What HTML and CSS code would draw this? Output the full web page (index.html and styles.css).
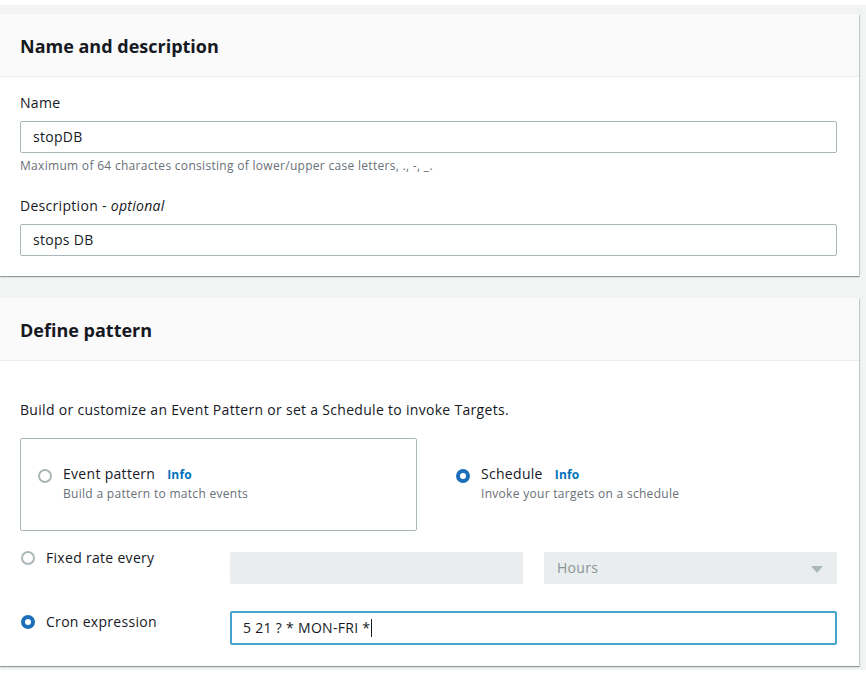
FILE: index.html
```html
<!DOCTYPE html>
<html>
<head>
<meta charset="utf-8">
<link rel="stylesheet" href="styles.css">
</head>
<body>
<div class="page">
  <section class="panel">
    <div class="panel-header"><h2>Name and description</h2></div>
    <div class="panel-body panel-body-1">
      <div class="field">
        <div class="label">Name</div>
        <div class="input">stopDB</div>
        <div class="hint">Maximum of 64 charactes consisting of lower/upper case letters, ., -, _.</div>
      </div>
      <div class="field field-2">
        <div class="label">Description - <i>optional</i></div>
        <div class="input">stops DB</div>
      </div>
    </div>
  </section>

  <section class="panel panel-2">
    <div class="panel-header"><h2>Define pattern</h2></div>
    <div class="panel-body panel-body-2">
      <p class="intro">Build or customize an Event Pattern or set a Schedule to invoke Targets.</p>
      <div class="tiles">
        <div class="tile tile-bordered">
          <span class="radio"></span>
          <div class="tile-text">
            <div class="tile-title">Event pattern <span class="info">Info</span></div>
            <div class="tile-sub">Build a pattern to match events</div>
          </div>
        </div>
        <div class="tile tile-plain">
          <span class="radio checked"></span>
          <div class="tile-text">
            <div class="tile-title">Schedule <span class="info">Info</span></div>
            <div class="tile-sub">Invoke your targets on a schedule</div>
          </div>
        </div>
      </div>
      <div class="row row-fixed">
        <div class="row-label"><span class="radio"></span><span>Fixed rate every</span></div>
        <div class="row-controls">
          <div class="input disabled"></div>
          <div class="input disabled select">Hours<span class="caret-down"></span></div>
        </div>
      </div>
      <div class="row row-cron">
        <div class="row-label"><span class="radio checked"></span><span>Cron expression</span></div>
        <div class="row-controls">
          <div class="input focused">5 21 ? * MON-FRI *<span class="text-caret"></span></div>
        </div>
      </div>
    </div>
  </section>
</div>
</body>
</html>
```

FILE: styles.css
```css
* { box-sizing: border-box; }
html, body { margin: 0; padding: 0; background: #ffffff; }
body {
  font-family: "Open Sans", "Liberation Sans", Arial, sans-serif;
  font-size: 14px;
  line-height: 22px;
  letter-spacing: 0.3px;
  color: #16191f;
}
.page {
  margin-top: 5px;
  background: #f2f3f3;
  padding: 9px 7px 4px 0;
  width: 866px;
}
.panel {
  background: #ffffff;
  width: 859px;
  box-shadow: 0 1px 1px 0 rgba(0,28,36,0.3), 1px 1px 1px 0 rgba(0,28,36,0.15);
}
.panel-2 { margin-top: 22px; }
.panel-header {
  background: #fafafa;
  border-bottom: 1px solid #eaeded;
  padding: 21px 20px 19px;
}
.panel-header h2 {
  margin: 0;
  font-size: 18px;
  line-height: 22px;
  font-weight: 700;
  letter-spacing: 0;
}
.panel-body { padding: 15px 22px 20px 20px; }
.panel-body-2 { padding-top: 38px; padding-bottom: 21px; }
.label { line-height: 22px; margin-bottom: 7px; }
.input {
  height: 32px;
  border: 1px solid #aab7b8;
  border-radius: 2px;
  padding: 0 12px;
  line-height: 30px;
  background: #fff;
  color: #16191f;
}
.hint {
  font-size: 12px;
  line-height: 16px;
  color: #687078;
  margin-top: 5px;
}
.field-2 { margin-top: 21px; }
.intro { margin: 0 0 17px 0; }
.tiles {
  display: grid;
  grid-template-columns: 397px 397px;
  column-gap: 20px;
}
.tile {
  height: 93px;
  display: flex;
  align-items: center;
  padding: 0 17px 4px 17px;
  border: 1px solid transparent;
}
.tile-plain { padding-left: 18px; }
.tile-bordered { border-color: #aab7b8; border-radius: 2px; }
.radio {
  width: 14px;
  height: 14px;
  border-radius: 50%;
  border: 2px solid #aab7b8;
  background: #fff;
  flex: none;
  align-self: flex-start;
}
.tile .radio { margin-top: 30px; }
.radio.checked {
  border: 4px solid #1d6fba;
  background: #fff;
}
.tile-text { margin-left: 11px; }
.tile-title { line-height: 22px; }
.info { color: #0073bb; font-weight: 700; font-size: 12px; margin-left: 8px; letter-spacing: 0.2px; }
.tile-sub { font-size: 12px; line-height: 16px; color: #687078; }
.row { display: flex; align-items: flex-start; }
.row-fixed { margin-top: 14px; }
.row-fixed .row-label { margin-top: 2px; }
.row-cron { margin-top: 27px; }
.row-label {
  width: 210px;
  display: flex;
  align-items: center;
  gap: 11px;
  padding-left: 1px;
  height: 22px;
}
.row-label .radio { align-self: center; }
.row-controls { flex: 1; display: flex; gap: 21px; }
.row-fixed .row-controls { margin-top: 7px; }
.row-controls .input { flex: 1; }
.input.disabled {
  background: #eaeded;
  border-color: #eaeded;
  color: #879596;
}
.select { position: relative; }
.caret-down {
  position: absolute;
  right: 13px;
  top: 13px;
  width: 0; height: 0;
  border-left: 6px solid transparent;
  border-right: 6px solid transparent;
  border-top: 7px solid #aab7b8;
}
.input.focused {
  height: 34px;
  border: 2px solid #44a3d0;
  line-height: 30px;
  padding-left: 11px;
}
.text-caret {
  display: inline-block;
  width: 1px;
  height: 18px;
  background: #16191f;
  vertical-align: -4px;
  margin-left: 1px;
}
```
